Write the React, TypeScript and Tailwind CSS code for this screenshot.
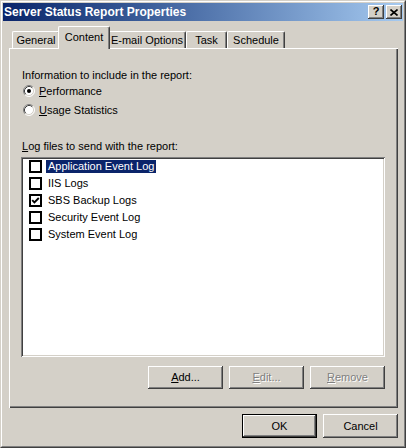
import React from 'react';

const raised =
  'shadow-[inset_-1px_-1px_0_#404040,inset_1px_1px_0_#ffffff,inset_-2px_-2px_0_#808080,inset_2px_2px_0_#d4d0c8]';
const sunken =
  'shadow-[inset_1px_1px_0_#808080,inset_-1px_-1px_0_#ffffff,inset_2px_2px_0_#404040,inset_-2px_-2px_0_#d4d0c8]';
const disabledText = 'text-[#808080] [text-shadow:1px_1px_0_#ffffff]';

const Radio: React.FC<{ checked?: boolean }> = ({ checked }) => (
  <svg width="12" height="12" viewBox="0 0 12 12" className="shrink-0">
    <circle cx="6" cy="6" r="5" fill="#ffffff" />
    <path d="M9.89 2.11 A5.5 5.5 0 0 0 2.11 9.89" stroke="#808080" fill="none" />
    <path d="M9.89 2.11 A5.5 5.5 0 0 1 2.11 9.89" stroke="#ffffff" fill="none" />
    <path d="M9.18 2.82 A4.5 4.5 0 0 0 2.82 9.18" stroke="#404040" fill="none" />
    <path d="M9.18 2.82 A4.5 4.5 0 0 1 2.82 9.18" stroke="#d4d0c8" fill="none" />
    {checked && <circle cx="6" cy="6" r="2" fill="#000000" />}
  </svg>
);

const Check: React.FC<{ checked?: boolean }> = ({ checked }) => (
  <svg width="13" height="13" viewBox="0 0 13 13" className="shrink-0">
    <rect x="1" y="1" width="11" height="11" fill="#ffffff" stroke="#000000" strokeWidth="2" />
    {checked && (
      <polyline points="3.2,6.2 5.4,8.4 9.8,4" fill="none" stroke="#000000" strokeWidth="1.9" />
    )}
  </svg>
);

const Btn: React.FC<{ children: React.ReactNode; disabled?: boolean; isDefault?: boolean; tall?: boolean }> = ({
  children,
  disabled,
  isDefault,
  tall,
}) => (
  <div
    className={`w-[75px] ${tall ? 'h-[24px]' : 'h-[23px]'} bg-[#d4d0c8] ${
      isDefault ? 'border border-black' : ''
    } flex`}
  >
    <div className={`flex-1 flex items-center justify-center ${raised} ${disabled ? disabledText : ''}`}>
      {children}
    </div>
  </div>
);

const tabs = [
  { label: 'General', w: 'w-[48px]' },
  { label: 'Content', w: 'w-[50px]', active: true },
  { label: 'E-mail Options', w: 'w-[78px]' },
  { label: 'Task', w: 'w-[41px]' },
  { label: 'Schedule', w: 'w-[58px]' },
];

const logs = [
  { name: 'Application Event Log', selected: true },
  { name: 'IIS Logs' },
  { name: 'SBS Backup Logs', checked: true },
  { name: 'Security Event Log' },
  { name: 'System Event Log' },
];

export default function App() {
  return (
    <div className="w-[406px] h-[448px] bg-[#d4d0c8] border border-t-[#d4d0c8] border-l-[#d4d0c8] border-r-[#404040] border-b-[#404040] font-['Liberation_Sans',Arial,sans-serif] text-[11px] text-black select-none">
      <div className="h-full border border-t-white border-l-white border-r-[#808080] border-b-[#808080] p-[1px] flex flex-col">
        {/* title bar */}
        <div className="h-[18px] shrink-0 flex items-center bg-linear-to-r from-[#0a246a] to-[#a6caf0] pl-[1px] pr-[1px]">
          <span className="text-white font-bold text-[12px] leading-none">Server Status Report Properties</span>
          <div className="ml-auto flex gap-[2px]">
            <div className={`w-[16px] h-[14px] bg-[#d4d0c8] ${raised} flex items-center justify-center`}>
              <span className="font-bold text-[11px] leading-none -mt-[1px]">?</span>
            </div>
            <div className={`w-[16px] h-[14px] bg-[#d4d0c8] ${raised} flex items-center justify-center`}>
              <svg width="8" height="7" viewBox="0 0 8 7">
                <path d="M0.5 0.5 L7.5 6.5 M7.5 0.5 L0.5 6.5" stroke="#000000" strokeWidth="1.6" />
              </svg>
            </div>
          </div>
        </div>

        <div className="flex-1 flex flex-col pl-[6px] pr-[5px]">
          {/* tabs */}
          <div className="mt-[7px] h-[20px] shrink-0 flex items-end pl-[3px] relative z-10">
            {tabs.map((t) =>
              t.active ? (
                <div
                  key={t.label}
                  className={`${t.w} box-content h-[20px] -mx-[2px] -mb-[1px] z-10 bg-[#d4d0c8] border-t border-l border-white border-r border-r-[#404040] rounded-t-[2px] shadow-[inset_-1px_0_0_#808080] flex items-center justify-center pb-[2px]`}
                >
                  {t.label}
                </div>
              ) : (
                <div
                  key={t.label}
                  className={`${t.w} h-[17px] bg-[#d4d0c8] border-t border-l border-white border-r border-r-[#404040] rounded-t-[2px] shadow-[inset_-1px_0_0_#808080] flex items-center justify-center`}
                >
                  {t.label}
                </div>
              )
            )}
          </div>

          {/* tab page */}
          <div className="h-[360px] shrink-0 shadow-[inset_1px_1px_0_#ffffff,inset_-1px_-1px_0_#404040,inset_-2px_-2px_0_#808080] flex flex-col pl-[12px] pr-[13px] pt-[19px]">
            <div className="h-[16px] leading-[16px] ml-[1px]">Information to include in the report:</div>
            <div className="h-[16px] flex items-center ml-[2px] gap-[4px]">
              <Radio checked />
              <span>
                <span className="underline underline-offset-[1px]">P</span>erformance
              </span>
            </div>
            <div className="mt-[3px] h-[16px] flex items-center ml-[2px] gap-[4px]">
              <Radio />
              <span>
                <span className="underline underline-offset-[1px]">U</span>sage Statistics
              </span>
            </div>
            <div className="mt-[20px] h-[16px] leading-[16px] ml-[1px]">
              <span className="underline underline-offset-[1px]">L</span>og files to send with the report:
            </div>

            <div className={`mt-[3px] h-[200px] shrink-0 bg-white ${sunken} p-[2px] pt-[1px] flex flex-col`}>
              {logs.map((l) => (
                <div key={l.name} className="h-[17px] flex items-center pl-[6px]">
                  <Check checked={l.checked} />
                  <span
                    className={`ml-[4px] px-[2px] h-[13px] leading-[13px] ${
                      l.selected ? 'bg-[#0a246a] text-white' : ''
                    }`}
                  >
                    {l.name}
                  </span>
                </div>
              ))}
            </div>

            <div className="mt-[9px] flex justify-end gap-[6px]">
              <Btn>
                <span>
                  <span className="underline underline-offset-[1px]">A</span>dd...
                </span>
              </Btn>
              <Btn disabled>
                <span>
                  <span className="underline underline-offset-[1px]">E</span>dit...
                </span>
              </Btn>
              <Btn disabled>
                <span>
                  <span className="underline underline-offset-[1px]">R</span>emove
                </span>
              </Btn>
            </div>
          </div>

          {/* dialog buttons */}
          <div className="mt-[6px] flex justify-end gap-[6px]">
            <Btn isDefault tall>
              OK
            </Btn>
            <Btn tall>Cancel</Btn>
          </div>
        </div>
      </div>
    </div>
  );
}
